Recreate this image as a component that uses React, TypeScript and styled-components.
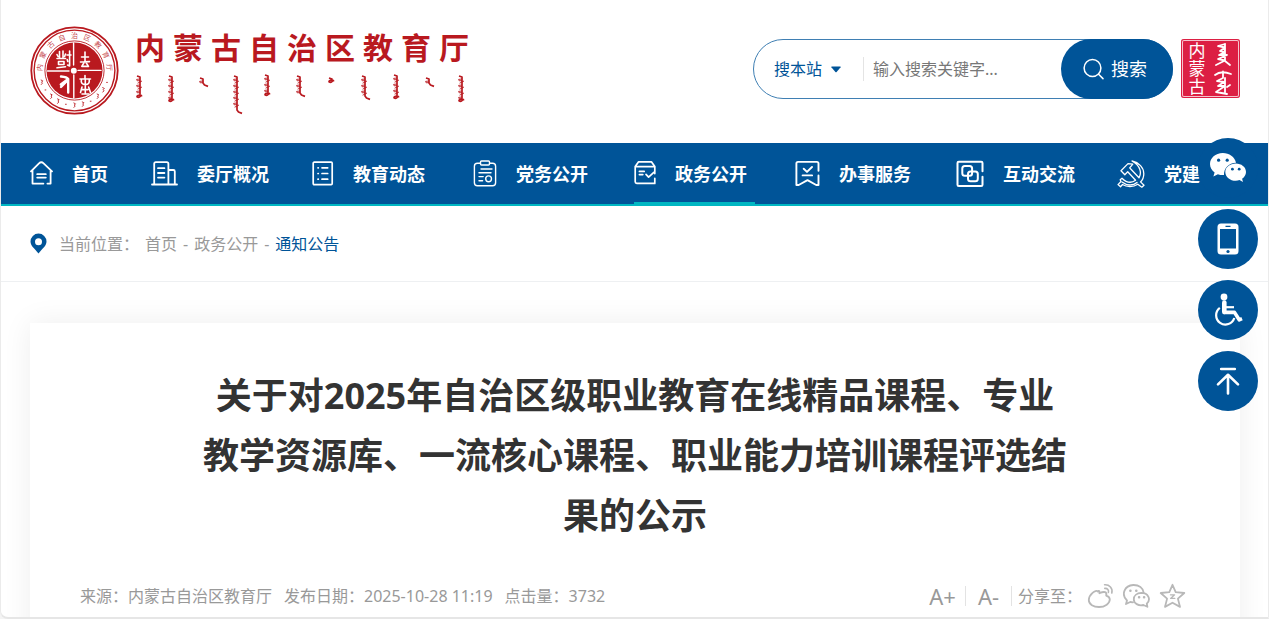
import React from "react";
import styled, { createGlobalStyle } from "styled-components";

const blue = "#005498";
const teal = "#00b7c2";
const red = "#b9191f";

const GlobalStyle = createGlobalStyle`
  * { box-sizing: border-box; }
  body {
    margin: 0;
    background: #f4f4f4;
    color: #333;
    font: 16px/24px "Noto Sans", "Noto Sans CJK SC", sans-serif;
  }
  a { color: inherit; text-decoration: none; }
  svg { display: block; flex: none; }
`;

const Page = styled.div`
  height: 100vh;
  overflow: hidden;
  background: #fff;
  border: 1px solid #ebebeb;
  border-top: 0;
  border-bottom: 2px solid #e6e6e6;
  border-radius: 0 0 0 8px;
`;

const Header = styled.header`
  display: flex;
  align-items: flex-start;
  justify-content: space-between;
  height: 143px;
  padding: 26px 28px 0 29px;
`;

const Brand = styled.a`
  display: flex;
  gap: 16px;
  color: ${red};
`;

const BrandText = styled.span`
  display: flex;
  flex-direction: column;
`;

const BrandName = styled.span`
  display: flex;
  gap: 8px;
  font-size: 30px;
  line-height: 44px;
  font-weight: 700;
`;

const Tools = styled.div`
  display: flex;
  gap: 8px;
  padding-top: 13px;
`;

const SearchForm = styled.form`
  display: flex;
  align-items: center;
  width: 420px;
  height: 60px;
  padding-left: 20px;
  border: 1px solid #3f7fb3;
  border-radius: 30px;
`;

const Scope = styled.label`
  display: flex;
  align-items: center;
  width: 90px;
  height: 24px;
  color: ${blue};
  border-right: 1px solid #e4e4e4;
`;

const ScopeSelect = styled.select`
  appearance: none;
  width: 57px;
  padding: 0;
  border: 0;
  background: transparent;
  color: inherit;
  font: inherit;
`;

const Keyword = styled.input`
  flex: 1;
  min-width: 0;
  padding: 0 9px;
  border: 0;
  outline: 0;
  background: transparent;
  font: inherit;
  &::placeholder { color: #777; opacity: 1; }
`;

const SearchButton = styled.button`
  display: flex;
  align-items: center;
  justify-content: center;
  gap: 7px;
  width: 112px;
  height: 60px;
  margin-right: -1px;
  padding: 0 4px 0 0;
  border: 0;
  border-radius: 30px;
  background: ${blue};
  color: #fff;
  font: inherit;
  font-size: 18px;
`;

const Seal = styled.a`
  display: flex;
  align-items: center;
  justify-content: space-around;
  width: 59px;
  height: 59px;
  padding: 0 4px;
  border-radius: 3px;
  background: #dc1f43;
  box-shadow: inset 0 0 0 1px #dc1f43, inset 0 0 0 2px #f6c3cd;
  color: #fff;
`;

const SealName = styled.span`
  width: 17px;
  font-size: 17px;
  line-height: 18px;
`;

const Nav = styled.nav`
  height: 63px;
  padding: 0 29px;
  background: ${blue};
  border-bottom: 2px solid ${teal};
`;

const NavList = styled.ul`
  display: flex;
  gap: 40px;
  margin: 0;
  padding: 0;
  list-style: none;
`;

const NavLink = styled.a<{ $active?: boolean; $short?: boolean }>`
  display: flex;
  align-items: center;
  gap: 19px;
  width: ${(p) => (p.$short ? 81 : 121)}px;
  height: 61px;
  border-top: 2px solid transparent;
  border-bottom: 2px solid ${(p) => (p.$active ? teal : "transparent")};
  color: #fff;
  font-size: 18px;
  font-weight: 700;
  white-space: nowrap;
`;

const Breadcrumb = styled.nav`
  display: flex;
  align-items: center;
  height: 76px;
  padding: 0 29px;
  border-bottom: 1px solid #eef0f2;
  color: #999;
`;

const CrumbLabel = styled.span`
  margin: 0 6px 0 12px;
`;

const CrumbList = styled.span`
  display: flex;
  gap: 6px;
`;

const Current = styled.a`
  color: ${blue};
`;

const Article = styled.main`
  min-height: 340px;
  margin: 41px 28px 0 29px;
  padding: 43px 50px 60px;
  background: #fff;
  box-shadow: 0 0 28px rgba(0, 0, 0, 0.07);
`;

const Title = styled.h1`
  margin: 0;
  padding: 0 120px;
  font-size: 36px;
  line-height: 60px;
  text-align: center;
`;

const Meta = styled.div`
  display: flex;
  justify-content: space-between;
  align-items: center;
  margin-top: 37px;
  color: #999;
`;

const Facts = styled.div`
  display: flex;
  gap: 12px;
`;

const Actions = styled.div`
  display: flex;
  align-items: center;
  padding-right: 4px;
`;

const SizeButton = styled.button`
  width: 46px;
  height: 20px;
  padding: 0;
  border: 0;
  border-right: 1px solid #e3e3e3;
  background: transparent;
  color: inherit;
  font: inherit;
  font-size: 22px;
  line-height: 20px;
  text-align: center;
`;

const Share = styled.div`
  display: flex;
  align-items: center;
  gap: 5px;
  padding-left: 6px;
`;

const ShareLinks = styled.div`
  display: flex;
  gap: 9px;
  color: #b8b8b8;
`;

const SideBar = styled.aside`
  position: fixed;
  top: 138px;
  right: 11px;
  display: flex;
  flex-direction: column;
  gap: 11px;
`;

const RoundLink = styled.a`
  display: flex;
  align-items: center;
  justify-content: center;
  width: 60px;
  height: 60px;
  border-radius: 50%;
  background: ${blue};
  color: #fff;
`;

type IconProps = { w: number; h?: number; sw?: number; children: React.ReactNode };

const Line = ({ w, h = 28, sw = 2, children }: IconProps) => (
  <svg width={w} height={h} viewBox={`0 0 ${w} ${h}`} fill="none" stroke="currentColor"
    strokeWidth={sw} strokeLinecap="round" strokeLinejoin="round" aria-hidden="true">
    {children}
  </svg>
);

const HomeIcon = () => (
  <Line w={23} sw={1.8}>
    <path d="M1 11.4 9 3.3Q11.3 1.2 13.6 3.3L22 11.4M2.5 10V23.6H13.4M20.6 10V23.6H17.4M7.2 14.2H15.8M7.2 17.6H15.8" />
  </Line>
);
const BuildingIcon = () => (
  <Line w={27} sw={1.8}>
    <path d="M1 24.5H26M3.2 24V3.8Q3.2 2.2 4.8 2.2H15.8Q17.4 2.2 17.4 3.8V24M17.4 10H22.4Q23.8 10 23.8 11.4V24M7 8.2H13.4M7 13H13.4M7 17.6H13.4" />
  </Line>
);
const ListIcon = () => (
  <Line w={22} sw={1.7}>
    <rect x="1.2" y="2.2" width="19" height="22.4" rx="1" />
    <path d="M6 7.8H6.3M10 7.8H15.7M6 13.5H6.3M10 13.5H15.7M6 19.2H6.3M10 19.2H15.7" />
  </Line>
);
const ClipboardIcon = () => (
  <Line w={24} sw={1.4}>
    <path d="M7.5 3.2H4.4Q1.4 3.2 1.4 6.2V22.8Q1.4 25.8 4.4 25.8H19.6Q22.6 25.8 22.6 22.8V6.2Q22.6 3.2 19.6 3.2H16.5" />
    <rect x="7.5" y="1" width="9" height="4" rx="1" />
    <path d="M8 9H19M6 12.8H18M6 16.6H10.2M6 20.8H9.6" />
    <circle cx="15.6" cy="18.8" r="2.9" />
  </Line>
);
const ArchiveIcon = () => (
  <Line w={22} sw={1.7}>
    <path d="M20.8 13.6V6.6L17.4 1.8H4.6L1.2 6.6V21.8Q1.2 23.4 2.8 23.4H20.8V18.4M1.5 6.6H20.5M5.4 11.4H10.2M5.4 14.6H8.8M12 14.4 14.6 17.2 19.8 12.4" />
  </Line>
);
const BookmarkIcon = () => (
  <Line w={25} sw={1.9}>
    <path d="M23.5 10.7V3.5Q23.5 1.9 21.9 1.9H3Q1.4 1.9 1.4 3.5V25H3.7L12.5 20.2 21.2 25H23.5V15.5M8.7 8.7 12 11.9 17 7M7.6 15.4H17.1" />
  </Line>
);
const ExchangeIcon = () => (
  <Line w={28} sw={2}>
    <path d="M26.5 11.2V3.1Q26.5 1.8 25.2 1.8H2.8Q1.5 1.8 1.5 3.1V24.7Q1.5 26 2.8 26H25.2Q26.5 26 26.5 24.7V16.8" />
    <rect x="6.3" y="5.9" width="9.8" height="9.8" rx="2.5" />
    <rect x="12" y="11.5" width="9.8" height="9.8" rx="2.5" />
  </Line>
);
const PartyIcon = () => (
  <Line w={28} sw={1.3}>
    <path d="M15 1C22 2.5 26.8 7.5 26.8 13.7C26.8 17.5 25.7 19.9 23.5 21.9L27 25.2 24.8 27.2 20.8 24.2C16 27.4 9.5 27 5.5 24.5L3.5 26.8 1 24.6 4 21.5 3.2 19.7 5 18.2C10 23.2 15 22.9 18.6 20.3L10.7 11.7 7.8 14.7 4 10.7 11 3.6 15.8 4.2 12.7 7.9 14 9.2 22 17.8C25 12.7 23.4 5.6 15 1Z" />
    <path d="M5 22C10.4 26.2 16.4 25.6 20 22.4" />
  </Line>
);

const navItems = [
  { label: "首页", icon: <HomeIcon />, short: true },
  { label: "委厅概况", icon: <BuildingIcon /> },
  { label: "教育动态", icon: <ListIcon /> },
  { label: "党务公开", icon: <ClipboardIcon /> },
  { label: "政务公开", icon: <ArchiveIcon />, active: true },
  { label: "办事服务", icon: <BookmarkIcon /> },
  { label: "互动交流", icon: <ExchangeIcon /> },
  { label: "党建", icon: <PartyIcon /> },
];

const orgName = Array.from("内蒙古自治区教育厅");

const Emblem = () => {
  const marks = [160, 146, 132, 118, 104, 90, 76, 62, 48, 34, 20];
  return (
    <svg width="89" height="90" viewBox="0 0 89 90" aria-hidden="true">
      <defs>
        <path id="ring" d="M12.2 47A32.4 32.4 0 1 1 76.8 47" />
      </defs>
      <g fill="none" stroke={red}>
        <circle cx="44.5" cy="44.5" r="43.2" strokeWidth="1.8" />
        <circle cx="44.5" cy="44.5" r="40.4" strokeWidth="1.4" />
        <circle cx="44.5" cy="44.5" r="29.6" strokeWidth="0.9" />
      </g>
      <circle cx="44.5" cy="44.5" r="28" fill={red} />
      <g fill={red} fillOpacity="0.85" fontSize="7" textAnchor="middle">
        {orgName.map((c, i) => (
          <text key={c}>
            <textPath href="#ring" startOffset={`${5 + i * 11.25}%`}>{c}</textPath>
          </text>
        ))}
      </g>
      <g stroke={red} strokeWidth="0.9" fill="none">
        {marks.map((a, i) => {
          const t = (a * Math.PI) / 180;
          const x = 44.5 + 34.8 * Math.cos(t);
          const y = 44.5 + 34.8 * Math.sin(t);
          return i % 3 === 1
            ? <path key={a} d={`M${x - 1} ${y}h1.6`} />
            : <path key={a} d={`M${x - 1} ${y - 2.5}l2 1-1.2 1.2 .8 1.1-1.4 1.6`} />;
        })}
      </g>
      <g stroke="#fff" fill="none" strokeWidth="1.6" strokeLinecap="round" strokeLinejoin="round">
        <path d="M43.6 17V39M43.8 49V72M17.5 45H39M48 44.4H71" strokeWidth="1.4" />
        <path d="M29.5 25.5V32M33 25V32M27 28.5 28 30.5M35.5 28 34.6 30.5M27 32.5H35.5M28.5 35.5H34V38.5H28.5ZM27 41.8 35.5 40.8M37 29H41M39.6 25V40L37.6 39M37.2 33.5 37.8 35.5" />
        <path d="M55 26V35M51.5 31H58.5M55 35 51.8 40.4H58.5L55 35M50.5 36 59.5 35.6" />
        <path d="M31 50.5Q37 51 38.2 53L30.8 58.5M38.2 53V66.5M31 61 36 56" strokeWidth="2.4" />
        <path d="M55 49.5V52.6M50 53H60.5M51.4 53.5Q50.4 58.6 55.5 58.6Q60 58.6 59.2 53.5M55.3 54V58M52 61 50.5 66.5M55.3 60V67M52 68H59M58.6 61 60.5 66.5M52 63.6H58" />
      </g>
      <circle cx="43.8" cy="44.8" r="3" fill="#fff" />
    </svg>
  );
};

/* Vertical Mongolian lettering: a spine with small teeth and loops. */
const words = [
  { x: 5, y: 6, h: 19, tail: 0 },
  { x: 37, y: 6, h: 23, tail: 0 },
  { x: 68, y: 8, h: 5, tail: 1 },
  { x: 102, y: 6, h: 34, tail: 1 },
  { x: 133, y: 5, h: 18, tail: 0 },
  { x: 165, y: 6, h: 17, tail: 1 },
  { x: 197, y: 8, h: 2, tail: 0 },
  { x: 230, y: 6, h: 20, tail: 1 },
  { x: 262, y: 5, h: 21, tail: 0 },
  { x: 294, y: 8, h: 5, tail: 1 },
  { x: 327, y: 6, h: 23, tail: 0 },
];

const wordSpine = (x: number, y: number, h: number, tail: number) =>
  `M${x - 3} ${y}L${x} ${y + 1}V${y + h}` +
  (tail ? "l1.5 2 3.5 1.4" : "q-3 .2-3 1.8 2 1.2 3.6-.8l1.6-.6");

const wordTeeth = (x: number, y: number, h: number) => {
  let d = "";
  for (let t = 3; t < h - 1; t += 3) {
    d += t % 2 ? `M${x} ${y + t}l-3.4 .4 .6 1.4 2.8-.2` : `M${x} ${y + t}l-2.4 1.2M${x} ${y + t}l2-1`;
  }
  return d;
};

const MongolianName = () => (
  <svg width="338" height="50" viewBox="0 0 338 50" fill="none" stroke={red}
    strokeLinejoin="round" aria-hidden="true">
    {words.map((w) => (
      <g key={w.x}>
        <path d={wordSpine(w.x, w.y, w.h, w.tail)} strokeWidth="1.7" />
        <path d={wordTeeth(w.x, w.y, w.h)} strokeWidth="0.9" />
      </g>
    ))}
  </svg>
);

const WeChatSolid = () => (
  <svg width="38" height="32" viewBox="0 0 38 32" fill="#fff" aria-hidden="true">
    <path d="M13.8 1C6.4 1 1 6 1 12.1C1 15.6 2.8 18.6 5.6 20.6L4.4 24.6 8.9 22.2C10.5 22.8 12 23.1 13.8 23.1H15C14.7 16.2 19.8 11 27 10.7C25.7 4.8 20.3 1 13.8 1Z" />
    <path d="M37 19.9C37 14.9 32.3 11.4 26.8 11.4C21.1 11.4 16.3 15 16.3 19.9C16.3 25 21.1 28.7 26.8 28.7C28 28.7 29.3 28.4 30.5 28.1L34 30.1 33.1 26.7C35.4 25 37 22.6 37 19.9Z" />
    <g fill={blue}>
      <circle cx="9.6" cy="8.2" r="1.6" /><circle cx="18.2" cy="8.2" r="1.6" />
      <circle cx="23.4" cy="17.2" r="1.4" /><circle cx="30.2" cy="17.2" r="1.4" />
    </g>
  </svg>
);

const PhoneIcon = () => (
  <svg width="22" height="32" viewBox="0 0 22 32" aria-hidden="true">
    <rect x="0.5" y="0.5" width="21" height="31" rx="3.5" fill="#fff" />
    <path d="M3 6H19V25.5H3ZM8.5 2.8H13.5V4H8.5Z" fill={blue} />
    <circle cx="11" cy="28.5" r="1.6" fill={blue} />
  </svg>
);

const WheelchairIcon = () => (
  <svg width="30" height="34" viewBox="0 0 30 34" fill="none" stroke="#fff" aria-hidden="true">
    <circle cx="11" cy="4" r="3.4" fill="#fff" stroke="none" />
    <path d="M11.3 9.5V19" strokeWidth="4.6" strokeLinecap="round" />
    <path d="M11.5 14.2H21" strokeWidth="2.2" />
    <path d="M10.5 19.4H21.5L26.2 26.8 29 25.6" strokeWidth="3.6" strokeLinejoin="round" />
    <path d="M6.8 14.8A9.3 9.3 0 1 0 21.3 25" strokeWidth="2.2" />
  </svg>
);

const TopIcon = () => (
  <Line w={24} h={28} sw={2.6}>
    <path d="M5.2 2H18.8M12 8V26.5M2 17.4 12 7.8 22 17.4" strokeLinecap="round" />
  </Line>
);

const WeiboIcon = () => (
  <Line w={27} h={26} sw={1.8}>
    <path d="M10.8 8.6C8.8 5.8 1.8 12 1.8 16.9C1.8 21.4 6.6 24 12 24C18.2 24 22.8 20.2 22.8 16.6C22.8 14 20.6 13 19.2 12.6C20.2 8.8 17.4 8 12.4 10.2C12.8 8.2 12.3 7 10.8 8.6Z" />
    <path d="M17.6 1.8C22.4 1.4 26 5.2 24.8 10M17.8 5.4C20.6 5.2 22 7.2 21.4 9.4" strokeWidth="1.6" />
  </Line>
);

const WeChatIcon = () => (
  <Line w={27} h={26} sw={1.8}>
    <path d="M10 19.4 7.2 19 3 21 4 17.5C-2.2 11.5 1.5 2.4 10.3 2C16 1.9 20 5 20.6 9.6" />
    <path d="M18.4 9.9C13.7 10 10.8 12.8 10.8 16.2C10.8 20.4 15.4 23.2 20.4 22L24.4 23.8 23.8 20.7C28.4 16.2 25 9.9 18.4 9.9Z" />
    <path d="M7.3 7.8H7.5M13.2 7.8H13.4M16 14.2H16.2M21 14.2H21.2" strokeWidth="2.4" />
  </Line>
);

const StarIcon = () => (
  <Line w={27} h={26} sw={1.8}>
    <path d="M13.5 1.8 16.7 9.2 25.3 10 18.9 15.6 21 23.9 13.5 19.7 6 23.9 8.1 15.6 1.7 10 10.3 9.2Z" />
    <path d="M11.4 11.8H15.6L11.6 15.4H15.8" strokeWidth="1.3" />
  </Line>
);

export default function App() {
  return (
    <Page>
      <GlobalStyle />
      <Header>
        <Brand href="#">
          <Emblem />
          <BrandText>
            <BrandName>
              {orgName.map((c) => <span key={c}>{c}</span>)}
            </BrandName>
            <MongolianName />
          </BrandText>
        </Brand>
        <Tools>
          <SearchForm>
            <Scope>
              <ScopeSelect aria-label="搜本站">
                <option>搜本站</option>
              </ScopeSelect>
              <svg width="10" height="7" viewBox="0 0 10 7" fill="currentColor" aria-hidden="true">
                <path d="M.8 .5H9.2Q10 .6 9.6 1.3L5.6 6Q5 6.6 4.4 6L.4 1.3Q0 .6 .8 .5Z" />
              </svg>
            </Scope>
            <Keyword type="text" aria-label="搜索关键字" placeholder="输入搜索关键字..." />
            <SearchButton type="button">
              <Line w={21} h={22} sw={1.5}>
                <circle cx="9.5" cy="10" r="8.4" />
                <path d="M15.6 16.2 20 20.6" />
              </Line>
              搜索
            </SearchButton>
          </SearchForm>
          <Seal href="#">
            <SealName>内蒙古</SealName>
            <svg width="20" height="56" viewBox="0 0 20 56" fill="none" stroke="#fff"
              strokeWidth="1.8" strokeLinecap="round" strokeLinejoin="round" aria-hidden="true">
              <path d="M12 3 5 5 12 6.5 7 10 12 11 6 14 14 14 5 18 12 19.5 3 24M12 3V20L17 24" />
              <path d="M2 34Q8 29 18 33M10 30.5V37L4 40 11 41 5 45 12 45 3 51 14 53M12 37V51M14 46 17 44" />
            </svg>
          </Seal>
        </Tools>
      </Header>

      <Nav aria-label="主导航">
        <NavList>
          {navItems.map((n) => (
            <li key={n.label}>
              <NavLink href="#" $active={n.active} $short={n.short}>
                {n.icon}
                {n.label}
              </NavLink>
            </li>
          ))}
        </NavList>
      </Nav>

      <Breadcrumb aria-label="当前位置">
        <svg width="17" height="21" viewBox="0 0 17 21" aria-hidden="true">
          <path fill={blue} fillRule="evenodd" d="M8.5.5A8 8 0 0 0 .5 8.6C.5 13 4.5 15.5 8.5 20.6 12.5 15.5 16.5 13 16.5 8.6A8 8 0 0 0 8.5.5ZM8.5 5.2A3.5 3.5 0 1 1 8.5 12.2 3.5 3.5 0 0 1 8.5 5.2Z" />
        </svg>
        <CrumbLabel>当前位置：</CrumbLabel>
        <CrumbList>
          <a href="#">首页</a>
          <span>-</span>
          <a href="#">政务公开</a>
          <span>-</span>
          <Current href="#">通知公告</Current>
        </CrumbList>
      </Breadcrumb>

      <Article>
        <Title>
          关于对2025年自治区级职业教育在线精品课程、专业教学资源库、一流核心课程、职业能力培训课程评选结果的公示
        </Title>
        <Meta>
          <Facts>
            <span>来源：内蒙古自治区教育厅</span>
            <span>发布日期：2025-10-28 11:19</span>
            <span>点击量：3732</span>
          </Facts>
          <Actions>
            <SizeButton type="button">A+</SizeButton>
            <SizeButton type="button">A-</SizeButton>
            <Share>
              <span>分享至：</span>
              <ShareLinks>
                <a href="#" aria-label="微博"><WeiboIcon /></a>
                <a href="#" aria-label="微信"><WeChatIcon /></a>
                <a href="#" aria-label="收藏"><StarIcon /></a>
              </ShareLinks>
            </Share>
          </Actions>
        </Meta>
      </Article>

      <SideBar>
        <RoundLink href="#" aria-label="微信"><WeChatSolid /></RoundLink>
        <RoundLink href="#" aria-label="手机版"><PhoneIcon /></RoundLink>
        <RoundLink href="#" aria-label="无障碍"><WheelchairIcon /></RoundLink>
        <RoundLink href="#" aria-label="返回顶部"><TopIcon /></RoundLink>
      </SideBar>
    </Page>
  );
}
